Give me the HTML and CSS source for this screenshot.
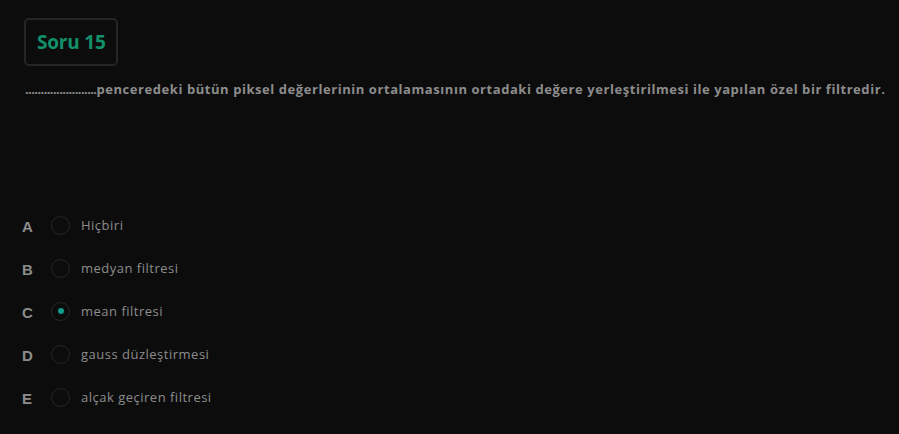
FILE: index.html
```html
<!DOCTYPE html>
<html lang="tr">
<head>
<meta charset="utf-8">
<link rel="stylesheet" href="styles.css">
</head>
<body>
<main class="page">
  <div class="badge">Soru 15</div>
  <p class="question"><span class="blank">.......................</span>penceredeki bütün piksel değerlerinin ortalamasının ortadaki değere yerleştirilmesi ile yapılan özel bir filtredir.</p>
  <ul class="options">
    <li class="option"><span class="letter">A</span><span class="radio"></span><span class="label">Hiçbiri</span></li>
    <li class="option"><span class="letter">B</span><span class="radio"></span><span class="label">medyan filtresi</span></li>
    <li class="option"><span class="letter">C</span><span class="radio checked"></span><span class="label">mean filtresi</span></li>
    <li class="option"><span class="letter">D</span><span class="radio"></span><span class="label">gauss düzleştirmesi</span></li>
    <li class="option"><span class="letter">E</span><span class="radio"></span><span class="label">alçak geçiren filtresi</span></li>
  </ul>
</main>
</body>
</html>
```

FILE: styles.css
```css
html, body {
  margin: 0;
  padding: 0;
  background: #0c0c0c;
}
body {
  font-family: "Open Sans", "DejaVu Sans", sans-serif;
  color: #8c8c8c;
}
.page {
  padding: 18px 0 0 24px;
}
.badge {
  display: inline-block;
  box-sizing: border-box;
  height: 48px;
  padding: 0 10px 0 11px;
  border: 2px solid #252525;
  border-radius: 5px;
  line-height: 44px;
  font-size: 19px;
  font-weight: 700;
  color: #12906a;
  letter-spacing: -0.2px;
}
.question {
  margin: 14px 0 0 1px;
  font-size: 13px;
  font-weight: 700;
  line-height: 18px;
  color: #8c8c8c;
  letter-spacing: 0.56px;
}
.blank {
  letter-spacing: -0.6px;
}
.options {
  list-style: none;
  margin: 116px 0 0 0;
  padding: 0;
  display: flex;
  flex-direction: column;
  gap: 21px;
}
.option {
  display: flex;
  align-items: center;
  height: 22px;
}
.letter {
  width: 29px;
  margin-left: -2px;
  padding-top: 3px;
  font-family: "Liberation Sans", Arial, sans-serif;
  font-weight: 700;
  font-size: 15px;
  color: #8c8c8c;
}
.radio {
  box-sizing: border-box;
  width: 19px;
  height: 19px;
  border: 1px solid #262626;
  border-radius: 50%;
  display: flex;
  align-items: center;
  justify-content: center;
}
.radio.checked::after {
  content: "";
  width: 6px;
  height: 6px;
  border-radius: 50%;
  background: #0f9c8c;
}
.label {
  margin-left: 11px;
  font-size: 13px;
  font-weight: 500;
  color: #8c8c8c;
  letter-spacing: 0.5px;
}
```
